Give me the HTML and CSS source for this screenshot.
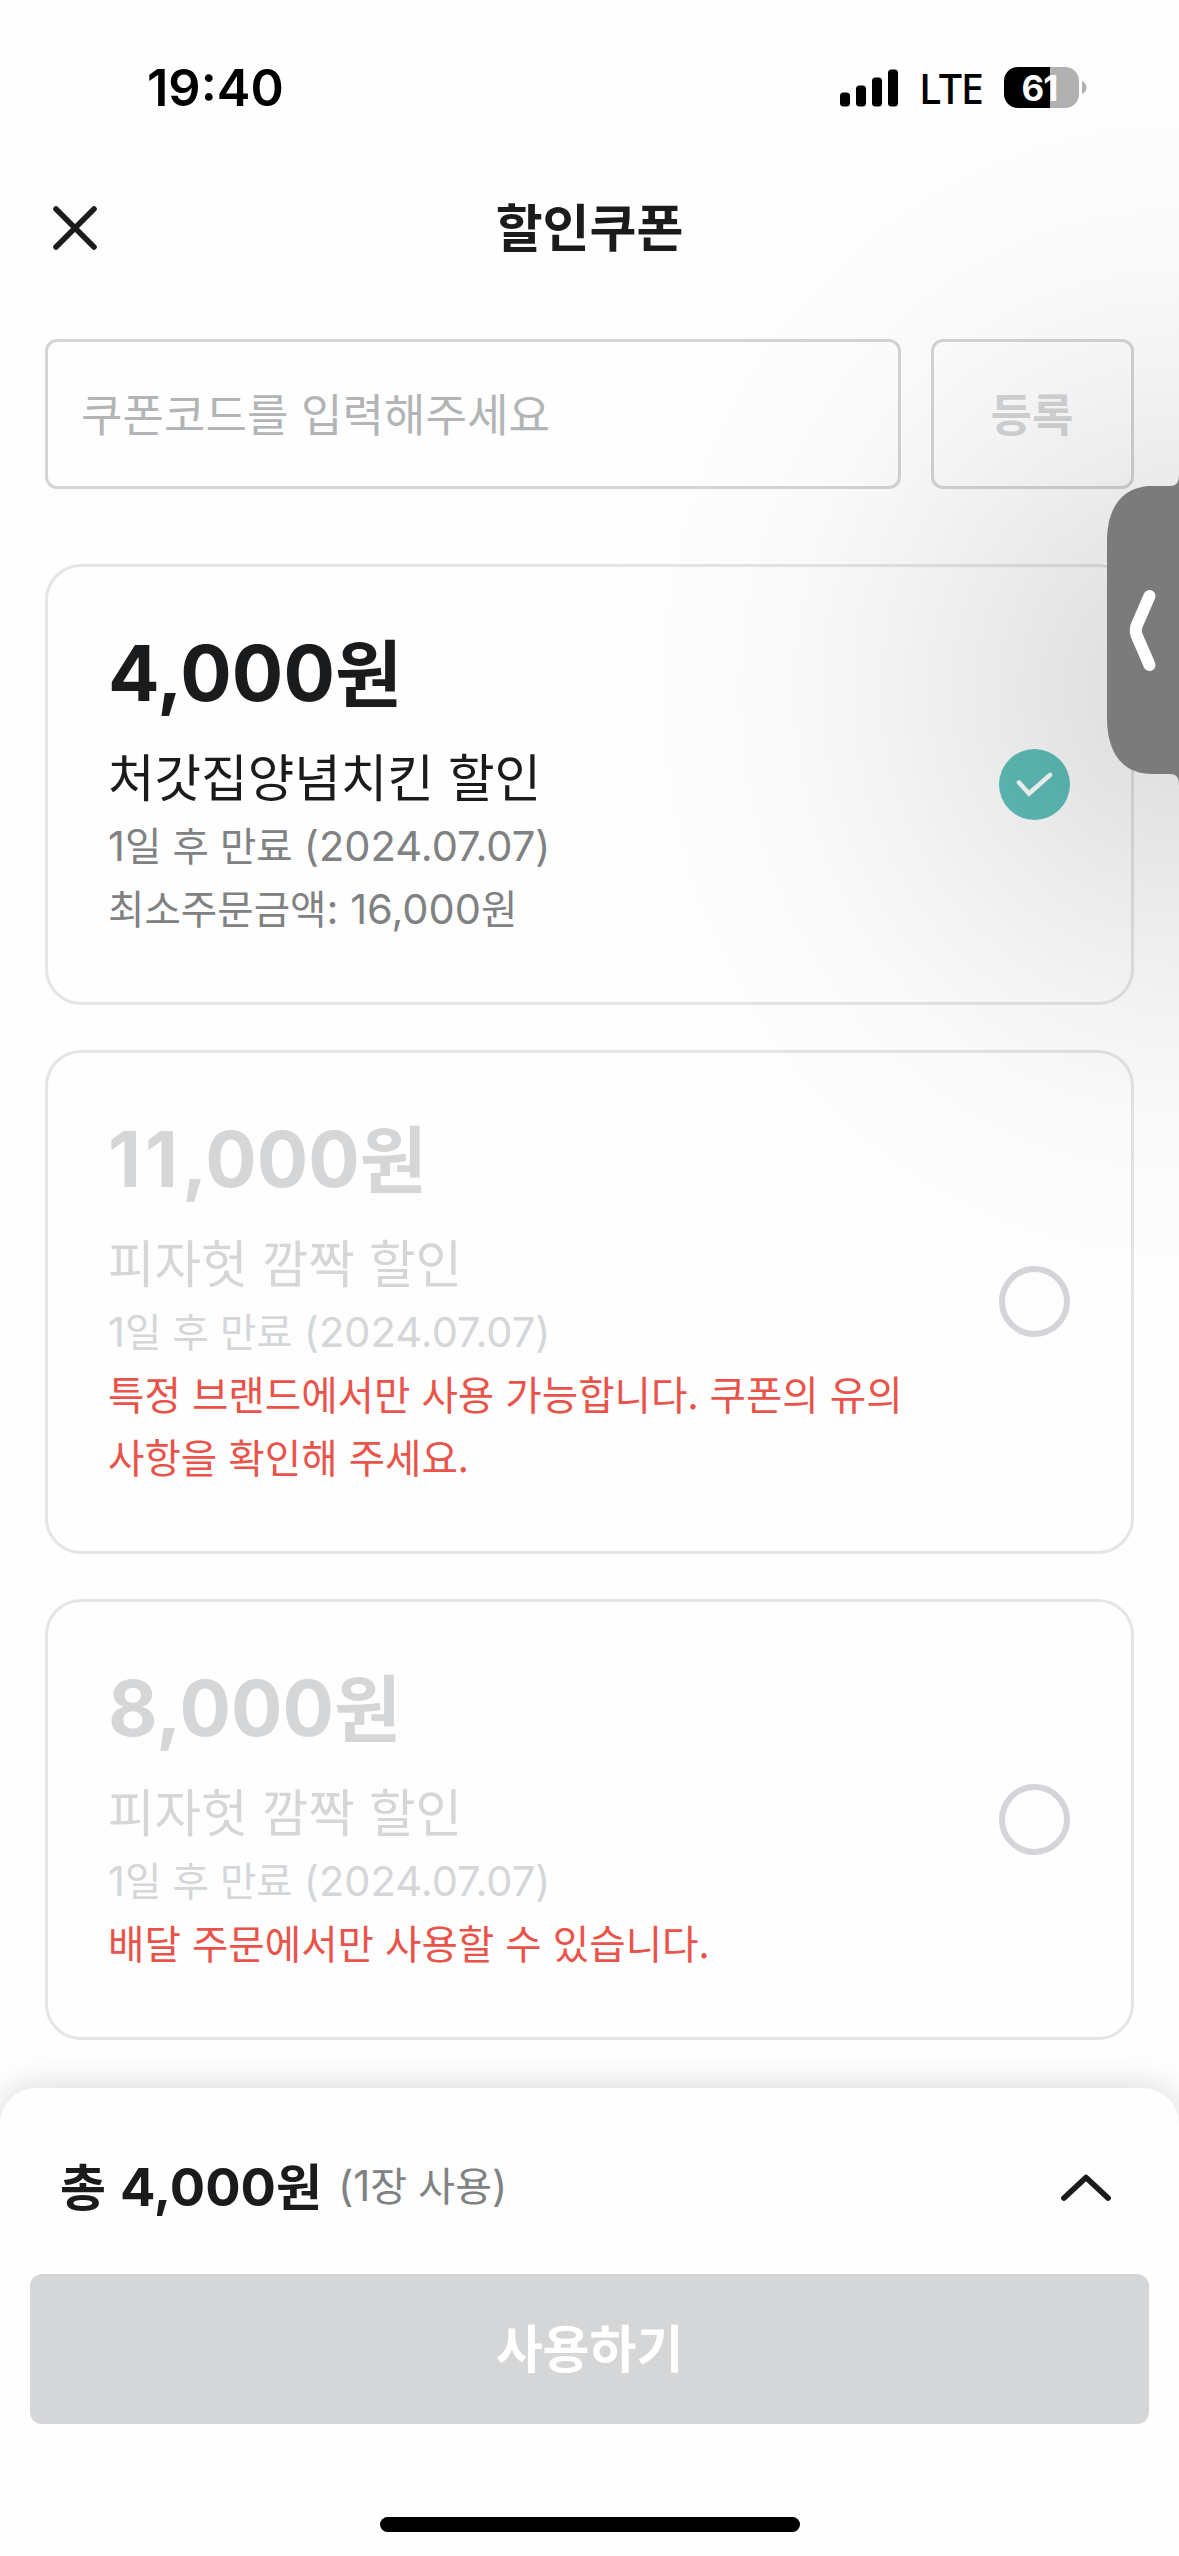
FILE: index.html
```html
<!DOCTYPE html>
<html lang="ko">
<head>
<meta charset="utf-8">
<title>할인쿠폰</title>
<link rel="stylesheet" href="styles.css">
</head>
<body>
<div class="screen">
  <header class="status">
    <div class="status-time">19:40</div>
    <div class="status-right">
      <svg class="signal" width="58" height="38" viewBox="0 0 58 38"><rect x="0" y="23.5" width="10" height="14" rx="3.5"/><rect x="16" y="16.500" width="10" height="21" rx="3.500"/><rect x="32" y="8.500" width="10" height="29" rx="3.500"/><rect x="48" y="0.500" width="10" height="37" rx="3.500"/></svg>
      <span class="network">LTE</span>
      <div class="battery"><span class="battery-level">61</span></div>
      <svg class="battery-nub" width="5" height="13" viewBox="0 0 5 13"><path d="M0 0C2.500 1 4.500 3.500 4.500 6.500S2.500 12 0 13Z" fill="#b1b1b1"/></svg>
    </div>
  </header>

  <nav class="navbar">
    <svg class="close" width="46" height="46" viewBox="0 0 46 46"><path d="M4 4L42 42M42 4L4 42" fill="none" stroke="#1a1b1d" stroke-width="5.600" stroke-linecap="round"/></svg>
    <h1 class="title">할인쿠폰</h1>
    <span class="nav-space"></span>
  </nav>

  <form class="code-form">
    <div class="code-input">쿠폰코드를 입력해주세요</div>
    <div class="code-button">등록</div>
  </form>

  <main class="coupons">
    <section class="coupon">
      <div class="coupon-text">
        <h2 class="price"><span class="num">4,000</span>원</h2>
        <p class="name">처갓집양념치킨 할인</p>
        <p class="line"><span class="num">1</span>일 후 만료 <span class="num">(2024.07.07)</span></p>
        <p class="line">최소주문금액<span class="num">: 16,000</span>원</p>
      </div>
      <svg class="radio" width="71" height="71" viewBox="0 0 71 71"><circle cx="35.500" cy="35.500" r="35.500" fill="#5fbfba"/><path d="M20 33.500L30 44.500L51 26" fill="none" stroke="#fff" stroke-width="4.500" stroke-linecap="round"/></svg>
    </section>
    <section class="coupon disabled">
      <div class="coupon-text">
        <h2 class="price"><span class="num"><span class="ones">11</span>,000</span>원</h2>
        <p class="name">피자헛 깜짝 할인</p>
        <p class="line"><span class="num">1</span>일 후 만료 <span class="num">(2024.07.07)</span></p>
        <p class="line warning">특정 브랜드에서만 사용 가능합니다. 쿠폰의 유의<br>사항을 확인해 주세요.</p>
      </div>
      <svg class="radio" width="71" height="71" viewBox="0 0 71 71"><circle cx="35.500" cy="35.500" r="32.500" fill="none" stroke="#d4d5d9" stroke-width="6"/></svg>
    </section>
    <section class="coupon disabled">
      <div class="coupon-text">
        <h2 class="price"><span class="num">8,000</span>원</h2>
        <p class="name">피자헛 깜짝 할인</p>
        <p class="line"><span class="num">1</span>일 후 만료 <span class="num">(2024.07.07)</span></p>
        <p class="line warning">배달 주문에서만 사용할 수 있습니다.</p>
      </div>
      <svg class="radio" width="71" height="71" viewBox="0 0 71 71"><circle cx="35.500" cy="35.500" r="32.500" fill="none" stroke="#d4d5d9" stroke-width="6"/></svg>
    </section>
  </main>

  <footer class="sheet">
    <div class="summary">
      <div class="total">총 <span class="num">4,000</span>원</div>
      <div class="count"><span class="num">(1</span>장 사용<span class="num">)</span></div>
      <svg class="chevron" width="54" height="32" viewBox="0 0 54 32"><path d="M5 27L27 6.500L49 27" fill="none" stroke="#1a1b1d" stroke-width="5.800" stroke-linecap="round" stroke-linejoin="round"/></svg>
    </div>
    <div class="use-button">사용하기</div>
    <div class="home-bar"></div>
  </footer>

  <div class="edge-shadow"></div>
  <svg class="edge-tab" width="72" height="312" viewBox="0 0 72 312"><path d="M72 0C72 8 70 12 63 12H45C20 12 0 28 0 68V244C0 284 20 300 45 300H63C70 300 72 304 72 312Z" fill="#7b7b7b"/><path d="M42.500 122L29.500 152Q28 156.500 29.500 161L42.500 191" fill="none" stroke="#fff" stroke-width="12" stroke-linecap="round" stroke-linejoin="round"/></svg>
</div>
</body>
</html>
```
FILE: styles.css
```css
* {
  box-sizing: border-box;
}

body {
  margin: 0;
  background: #fefefe;
}

h1, h2, p {
  margin: 0;
}

.screen {
  position: relative;
  display: flex;
  flex-direction: column;
  width: 1179px;
  height: 2556px;
  overflow: hidden;
  background: #fefefe;
  color: #1a1b1d;
  font-family: "Noto Sans CJK KR", sans-serif;
}

.num {
  font-family: Inter, sans-serif;
  font-size: 1.05em;
  line-height: 1;
}

.status {
  display: flex;
  align-items: center;
  justify-content: space-between;
  height: 141px;
  padding: 34px 92px 0 147px;
  color: #000;
  font-family: Inter, sans-serif;
}

.status-time {
  font-size: 50.5px;
  font-weight: 600;
}

.status-right {
  display: flex;
  align-items: center;
}

.signal {
  margin-right: 21px;
}

.network {
  width: 85px;
  font-family: "Noto Sans", sans-serif;
  font-size: 41.5px;
  font-weight: 500;
  letter-spacing: -1.5px;
  line-height: 56px;
}

.battery {
  display: flex;
  align-items: center;
  justify-content: center;
  width: 75px;
  height: 41px;
  margin-right: 3px;
  border-radius: 14px;
  background: linear-gradient(to right, #000 46px, #b1b1b1 46px);
}

.battery-level {
  padding-right: 4px;
  color: #fff;
  font-size: 35px;
  font-weight: 700;
  letter-spacing: -1px;
}

.navbar {
  display: flex;
  align-items: center;
  justify-content: space-between;
  height: 174px;
  padding: 0 52px;
}

.title {
  padding-bottom: 6px;
  font-size: 51px;
  font-weight: 700;
  line-height: 70px;
}

.nav-space {
  width: 46px;
}

.code-form {
  display: flex;
  gap: 30px;
  margin: 24px 45px 75px;
}

.code-input,
.code-button {
  height: 150px;
  border: 3px solid #d4d5d6;
  border-radius: 12px;
  line-height: 141px;
}

.code-input {
  flex: 1;
  padding-left: 33px;
  color: #b3b4b5;
  font-size: 45.1px;
}

.code-button {
  width: 203px;
  padding-right: 1px;
  color: #d4d5d7;
  font-size: 45px;
  font-weight: 700;
  text-align: center;
}

.coupons {
  display: flex;
  flex-direction: column;
  gap: 45px;
  padding: 0 45px;
}

.coupon {
  display: flex;
  align-items: center;
  justify-content: space-between;
  padding: 58px 61px 64px 60px;
  border: 3px solid #e4e5e6;
  border-radius: 36px;
}

.radio {
  margin-top: 5px;
}

.price {
  height: 89px;
  margin-bottom: 24px;
  font-size: 73px;
  font-weight: 700;
  line-height: 88px;
}

.price .num {
  font-size: 76.4px;
}

.price .ones {
  letter-spacing: 4px;
}

.name {
  height: 74px;
  font-size: 50.6px;
  line-height: 74px;
}

.line {
  color: #808182;
  font-size: 39.6px;
  line-height: 63px;
}

.disabled .price,
.disabled .name,
.disabled .line {
  color: #d5d6d8;
}

.disabled .warning {
  color: #e9534a;
}

.sheet {
  display: flex;
  flex-direction: column;
  flex: 1;
  align-items: center;
  margin-top: 48px;
  padding: 0 30px;
  border-radius: 36px 36px 0 0;
  background: #fefefe;
  box-shadow: 0 0 36px rgba(0, 0, 0, 0.16);
}

.summary {
  display: flex;
  align-items: center;
  align-self: stretch;
  height: 186px;
  padding: 12px 36px 0 30px;
}

.total {
  margin-right: 16px;
  padding-bottom: 7px;
  font-size: 50px;
  font-weight: 700;
}

.count {
  flex: 1;
  padding-bottom: 7px;
  color: #808182;
  font-size: 40px;
}

.use-button {
  width: 1119px;
  height: 150px;
  border-radius: 12px;
  background: #d5d6d8;
  color: #fff;
  font-size: 51px;
  font-weight: 700;
  line-height: 145px;
  text-align: center;
}

.home-bar {
  width: 420px;
  height: 15px;
  margin-top: 93px;
  border-radius: 8px;
  background: #000;
}

/* soft shade spreading from the tab at the right edge */
.edge-shadow {
  position: absolute;
  top: 0;
  right: 0;
  width: 620px;
  height: 1343px;
  background: radial-gradient(640px 700px at 620px 690px, rgba(0, 0, 0, 0.13) 0%, rgba(0, 0, 0, 0.115) 12%, rgba(0, 0, 0, 0.08) 29%, rgba(0, 0, 0, 0.04) 48%, rgba(0, 0, 0, 0.02) 61%, rgba(0, 0, 0, 0.011) 71%, rgba(0, 0, 0, 0.004) 84%, rgba(0, 0, 0, 0) 96%);
}

.edge-tab {
  position: absolute;
  top: 474px;
  right: 0;
}
```
